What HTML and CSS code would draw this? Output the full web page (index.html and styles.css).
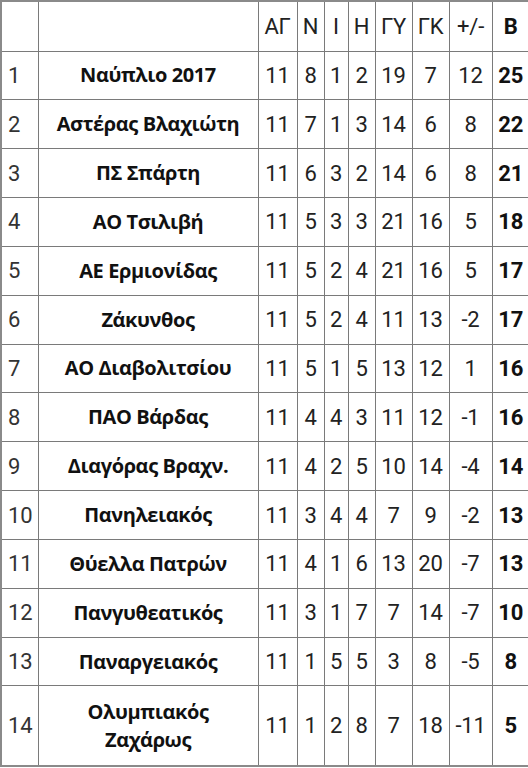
FILE: index.html
```html
<!DOCTYPE html>
<html>
<head>
<meta charset="utf-8">
<link rel="stylesheet" href="styles.css">
</head>
<body>
<table class="standings">
<colgroup>
<col class="c-rank"><col class="c-team"><col class="c-ag"><col class="c-n"><col class="c-i"><col class="c-h"><col class="c-gy"><col class="c-gk"><col class="c-diff"><col class="c-b">
</colgroup>
<thead>
<tr class="head"><th></th><th></th><th>ΑΓ</th><th>Ν</th><th>Ι</th><th>Η</th><th>ΓΥ</th><th>ΓΚ</th><th>+/-</th><th class="pts">Β</th></tr>
</thead>
<tbody>
<tr><td>1</td><td class="team">Ναύπλιο 2017</td><td>11</td><td>8</td><td>1</td><td>2</td><td>19</td><td>7</td><td>12</td><td class="pts">25</td></tr>
<tr><td>2</td><td class="team">Αστέρας Βλαχιώτη</td><td>11</td><td>7</td><td>1</td><td>3</td><td>14</td><td>6</td><td>8</td><td class="pts">22</td></tr>
<tr><td>3</td><td class="team">ΠΣ Σπάρτη</td><td>11</td><td>6</td><td>3</td><td>2</td><td>14</td><td>6</td><td>8</td><td class="pts">21</td></tr>
<tr><td>4</td><td class="team">ΑΟ Τσιλιβή</td><td>11</td><td>5</td><td>3</td><td>3</td><td>21</td><td>16</td><td>5</td><td class="pts">18</td></tr>
<tr><td>5</td><td class="team">ΑΕ Ερμιονίδας</td><td>11</td><td>5</td><td>2</td><td>4</td><td>21</td><td>16</td><td>5</td><td class="pts">17</td></tr>
<tr><td>6</td><td class="team">Ζάκυνθος</td><td>11</td><td>5</td><td>2</td><td>4</td><td>11</td><td>13</td><td>-2</td><td class="pts">17</td></tr>
<tr><td>7</td><td class="team">ΑΟ Διαβολιτσίου</td><td>11</td><td>5</td><td>1</td><td>5</td><td>13</td><td>12</td><td>1</td><td class="pts">16</td></tr>
<tr><td>8</td><td class="team">ΠΑΟ Βάρδας</td><td>11</td><td>4</td><td>4</td><td>3</td><td>11</td><td>12</td><td>-1</td><td class="pts">16</td></tr>
<tr><td>9</td><td class="team">Διαγόρας Βραχν.</td><td>11</td><td>4</td><td>2</td><td>5</td><td>10</td><td>14</td><td>-4</td><td class="pts">14</td></tr>
<tr><td>10</td><td class="team">Πανηλειακός</td><td>11</td><td>3</td><td>4</td><td>4</td><td>7</td><td>9</td><td>-2</td><td class="pts">13</td></tr>
<tr><td>11</td><td class="team">Θύελλα Πατρών</td><td>11</td><td>4</td><td>1</td><td>6</td><td>13</td><td>20</td><td>-7</td><td class="pts">13</td></tr>
<tr><td>12</td><td class="team">Πανγυθεατικός</td><td>11</td><td>3</td><td>1</td><td>7</td><td>7</td><td>14</td><td>-7</td><td class="pts">10</td></tr>
<tr><td>13</td><td class="team">Παναργειακός</td><td>11</td><td>1</td><td>5</td><td>5</td><td>3</td><td>8</td><td>-5</td><td class="pts">8</td></tr>
<tr class="tall"><td>14</td><td class="team">Ολυμπιακός<br>Ζαχάρως</td><td>11</td><td>1</td><td>2</td><td>8</td><td>7</td><td>18</td><td>-11</td><td class="pts">5</td></tr>
</tbody>
</table>
</body>
</html>
```
FILE: styles.css
```css
html, body {
  margin: 0;
  padding: 0;
  background: #fff;
}

.standings {
  border-collapse: collapse;
  table-layout: fixed;
  width: 529px;
  border: 2px solid #8a8a8a;
  font-family: Roboto, "Liberation Sans", sans-serif;
  font-size: 22px;
  color: #222;
}

.standings th,
.standings td {
  border: 1px solid #7a7a7a;
  padding: 0;
  text-align: center;
  vertical-align: middle;
  font-weight: 400;
  letter-spacing: -0.2px;
}

.c-rank { width: 37px; }
.c-team { width: 220px; }
.c-ag { width: 39px; }
.c-n { width: 27px; }
.c-i { width: 24px; }
.c-h { width: 27px; }
.c-gy { width: 37px; }
.c-gk { width: 37px; }
.c-diff { width: 43px; }
.c-b { width: 38px; }

.head { height: 50px; }
tbody tr { height: 48.85px; }
tbody tr.tall { height: 80px; }

.standings td:first-child {
  text-align: left;
  padding-left: 6px;
  color: #333;
}

.standings .team {
  font-family: "Open Sans", "Noto Sans", sans-serif;
  font-weight: 700;
  font-size: 20px;
  letter-spacing: -0.4px;
  color: #111;
  line-height: 28px;
}

.standings .pts {
  font-weight: 700;
  color: #111;
}
```
